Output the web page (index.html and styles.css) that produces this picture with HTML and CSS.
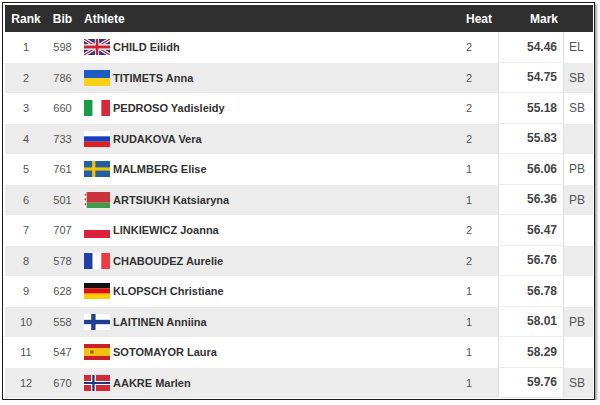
FILE: index.html
```html
<!DOCTYPE html>
<html>
<head>
<meta charset="utf-8">
<link rel="stylesheet" href="styles.css">
</head>
<body>
<div class="frame">
  <div class="results">
    <div class="row head">
      <div class="c rank">Rank</div>
      <div class="c bib">Bib</div>
      <div class="c ath">Athlete</div>
      <div class="c heat">Heat</div>
      <div class="c mark">Mark</div>
      <div class="c note"></div>
    </div>

    <div class="row">
      <div class="c rank">1</div><div class="c bib">598</div>
      <div class="c ath"><svg class="flag" viewBox="0 0 60 30" preserveAspectRatio="none"><rect width="60" height="30" fill="#1f3a8a"/><path d="M0,0 L60,30 M60,0 L0,30" stroke="#fff" stroke-width="7"/><path d="M0,0 L60,30 M60,0 L0,30" stroke="#d0202e" stroke-width="2.5"/><path d="M30,0 V30 M0,15 H60" stroke="#fff" stroke-width="10"/><path d="M30,0 V30 M0,15 H60" stroke="#d0202e" stroke-width="6"/></svg><span class="name">CHILD Eilidh</span></div>
      <div class="c heat">2</div><div class="c mark">54.46</div><div class="c note">EL</div>
    </div>

    <div class="row alt">
      <div class="c rank">2</div><div class="c bib">786</div>
      <div class="c ath"><svg class="flag" viewBox="0 0 2 2" preserveAspectRatio="none"><rect width="2" height="1" fill="#1e5bc6"/><rect y="1" width="2" height="1" fill="#f7d117"/></svg><span class="name">TITIMETS Anna</span></div>
      <div class="c heat">2</div><div class="c mark">54.75</div><div class="c note">SB</div>
    </div>

    <div class="row">
      <div class="c rank">3</div><div class="c bib">660</div>
      <div class="c ath"><svg class="flag" viewBox="0 0 3 2" preserveAspectRatio="none"><rect width="1" height="2" fill="#1a9a4a"/><rect x="1" width="1" height="2" fill="#fff"/><rect x="2" width="1" height="2" fill="#d62a3a"/></svg><span class="name">PEDROSO Yadisleidy</span></div>
      <div class="c heat">2</div><div class="c mark">55.18</div><div class="c note">SB</div>
    </div>

    <div class="row alt">
      <div class="c rank">4</div><div class="c bib">733</div>
      <div class="c ath"><svg class="flag" viewBox="0 0 3 3" preserveAspectRatio="none"><rect width="3" height="1" fill="#fff"/><rect y="1" width="3" height="1" fill="#1a3fc0"/><rect y="2" width="3" height="1" fill="#e02020"/></svg><span class="name">RUDAKOVA Vera</span></div>
      <div class="c heat">2</div><div class="c mark">55.83</div><div class="c note"></div>
    </div>

    <div class="row">
      <div class="c rank">5</div><div class="c bib">761</div>
      <div class="c ath"><svg class="flag" viewBox="0 0 16 10" preserveAspectRatio="none"><rect width="16" height="10" fill="#1f5fa6"/><rect x="5" width="2" height="10" fill="#f2c200"/><rect y="4" width="16" height="2" fill="#f2c200"/></svg><span class="name">MALMBERG Elise</span></div>
      <div class="c heat">1</div><div class="c mark">56.06</div><div class="c note">PB</div>
    </div>

    <div class="row alt">
      <div class="c rank">6</div><div class="c bib">501</div>
      <div class="c ath"><svg class="flag" viewBox="0 0 30 15" preserveAspectRatio="none"><rect width="30" height="10" fill="#c9343c"/><rect y="10" width="30" height="5" fill="#3f9a4c"/><rect width="3" height="15" fill="#fff"/><path d="M1.5,1 L2.5,2.5 L1.5,4 L0.5,2.5Z M1.5,5.5 L2.5,7 L1.5,8.5 L0.5,7Z M1.5,10 L2.5,11.5 L1.5,13 L0.5,11.5Z" fill="#c9343c"/></svg><span class="name">ARTSIUKH Katsiaryna</span></div>
      <div class="c heat">1</div><div class="c mark">56.36</div><div class="c note">PB</div>
    </div>

    <div class="row">
      <div class="c rank">7</div><div class="c bib">707</div>
      <div class="c ath"><svg class="flag" viewBox="0 0 2 2" preserveAspectRatio="none"><rect width="2" height="1" fill="#fff"/><rect y="1" width="2" height="1" fill="#dc1f3c"/></svg><span class="name">LINKIEWICZ Joanna</span></div>
      <div class="c heat">2</div><div class="c mark">56.47</div><div class="c note"></div>
    </div>

    <div class="row alt">
      <div class="c rank">8</div><div class="c bib">578</div>
      <div class="c ath"><svg class="flag" viewBox="0 0 3 2" preserveAspectRatio="none"><rect width="1" height="2" fill="#1f3fa8"/><rect x="1" width="1" height="2" fill="#fff"/><rect x="2" width="1" height="2" fill="#ee3b40"/></svg><span class="name">CHABOUDEZ Aurelie</span></div>
      <div class="c heat">2</div><div class="c mark">56.76</div><div class="c note"></div>
    </div>

    <div class="row">
      <div class="c rank">9</div><div class="c bib">628</div>
      <div class="c ath"><svg class="flag" viewBox="0 0 3 3" preserveAspectRatio="none"><rect width="3" height="1" fill="#111"/><rect y="1" width="3" height="1" fill="#dd1010"/><rect y="2" width="3" height="1" fill="#ffcc00"/></svg><span class="name">KLOPSCH Christiane</span></div>
      <div class="c heat">1</div><div class="c mark">56.78</div><div class="c note"></div>
    </div>

    <div class="row alt">
      <div class="c rank">10</div><div class="c bib">558</div>
      <div class="c ath"><svg class="flag" viewBox="0 0 18 11" preserveAspectRatio="none"><rect width="18" height="11" fill="#fff"/><rect x="5" width="3" height="11" fill="#1d3f8f"/><rect y="4" width="18" height="3" fill="#1d3f8f"/></svg><span class="name">LAITINEN Anniina</span></div>
      <div class="c heat">1</div><div class="c mark">58.01</div><div class="c note">PB</div>
    </div>

    <div class="row">
      <div class="c rank">11</div><div class="c bib">547</div>
      <div class="c ath"><svg class="flag" viewBox="0 0 30 20" preserveAspectRatio="none"><rect width="30" height="20" fill="#c8202a"/><rect y="5" width="30" height="10" fill="#f4c20d"/><rect x="7" y="8" width="4" height="4" fill="#b5502a"/></svg><span class="name">SOTOMAYOR Laura</span></div>
      <div class="c heat">1</div><div class="c mark">58.29</div><div class="c note"></div>
    </div>

    <div class="row alt">
      <div class="c rank">12</div><div class="c bib">670</div>
      <div class="c ath"><svg class="flag" viewBox="0 0 22 16" preserveAspectRatio="none"><rect width="22" height="16" fill="#d22a36"/><rect x="6" width="4" height="16" fill="#fff"/><rect y="6" width="22" height="4" fill="#fff"/><rect x="7" width="2" height="16" fill="#1f3a7a"/><rect y="7" width="22" height="2" fill="#1f3a7a"/></svg><span class="name">AAKRE Marlen</span></div>
      <div class="c heat">1</div><div class="c mark">59.76</div><div class="c note">SB</div>
    </div>
  </div>
</div>
</body>
</html>
```
FILE: styles.css
```css
html, body {
  margin: 0;
  padding: 0;
  background: #fff;
}

body {
  font-family: "Liberation Sans", Arial, sans-serif;
  font-size: 11px;
  color: #555;
}

.frame {
  width: 588px;
  margin: 2px 0 0 2px;
  padding: 2px 1px 1px 2px;
  border: 1px solid #1a1a1a;
  box-shadow: 2px 2px 2px rgba(0, 0, 0, 0.35);
  background: #fff;
}

.results {
  display: flex;
  flex-direction: column;
}

.row {
  display: grid;
  grid-template-columns: 42px 31px 1fr 38px 66px 29px;
  height: 30.5px;
  background: #fff;
}

.row.alt {
  background: #ececec;
}

.row.head {
  height: 27px;
  background: #2f2f2f;
  color: #fff;
  font-weight: bold;
  font-size: 12px;
}

.c {
  display: flex;
  align-items: center;
  box-sizing: border-box;
  white-space: nowrap;
}

.rank, .bib {
  justify-content: center;
}

.ath {
  padding-left: 6px;
}

.head .ath {
  padding-left: 6px;
}

.heat {
  padding-left: 6px;
}

.head .heat {
  padding-left: 6px;
}

.mark {
  justify-content: flex-end;
  padding-right: 6px;
  font-weight: bold;
  font-size: 12px;
  color: #444;
}

.row:not(.head) .mark {
  background: #fff;
  border-left: 1px solid #e0e0e0;
  border-right: 1px solid #e0e0e0;
  border-bottom: 1px solid #ededed;
}

.row.head .mark {
  color: #fff;
}

.note {
  padding-left: 5px;
  font-size: 12px;
  color: #555;
}

.flag {
  width: 26px;
  height: 16px;
  flex: none;
  display: block;
  margin-right: 3px;
}

.name {
  font-weight: bold;
  color: #333;
}
```
